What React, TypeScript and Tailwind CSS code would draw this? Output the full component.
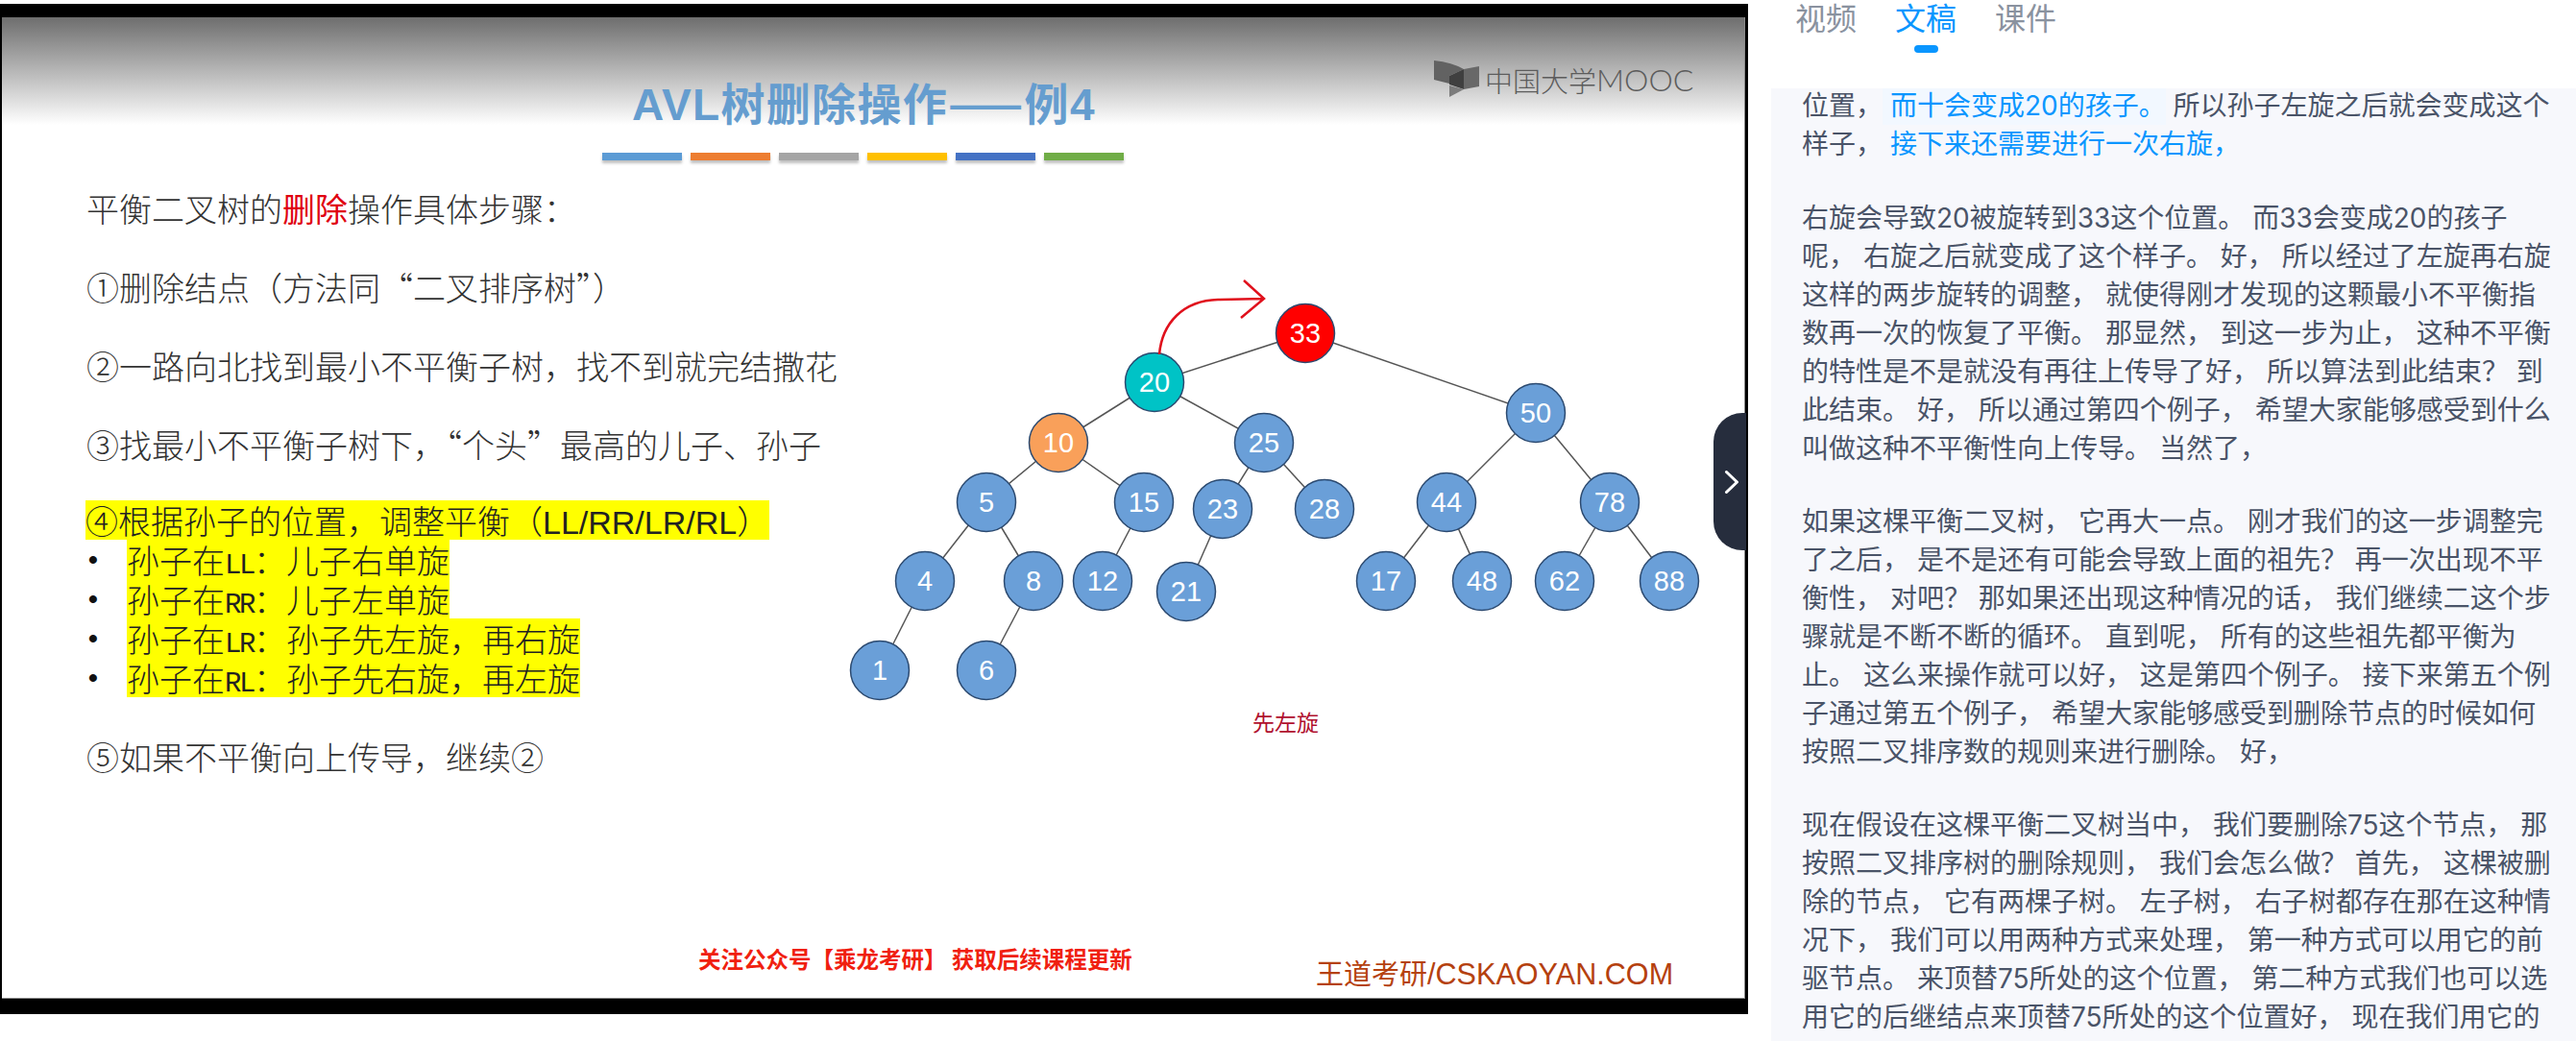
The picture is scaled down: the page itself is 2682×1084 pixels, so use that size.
import React from "react";

const nodes: [number, number, string, string?][] = [
  [1359, 343, "33", "#ff0000"], [1202, 394, "20", "#00c3c6"], [1599, 426, "50"], [1102, 457, "10", "#f9a05a"],
  [1316, 457, "25"], [1027, 519, "5"], [1191, 519, "15"], [1273, 526, "23"], [1379, 526, "28"],
  [1506, 519, "44"], [1676, 519, "78"], [963, 601, "4"], [1076, 601, "8"], [1148, 601, "12"],
  [1235, 612, "21"], [1443, 601, "17"], [1543, 601, "48"], [1629, 601, "62"], [1738, 601, "88"],
  [916, 694, "1"], [1027, 694, "6"],
];
const edges = [
  ["33", "20"], ["33", "50"], ["20", "10"], ["20", "25"], ["10", "5"], ["10", "15"], ["25", "23"], ["25", "28"],
  ["50", "44"], ["50", "78"], ["5", "4"], ["5", "8"], ["15", "12"], ["23", "21"], ["44", "17"], ["44", "48"],
  ["78", "62"], ["78", "88"], ["4", "1"], ["8", "6"],
];
const pos = (k: string) => nodes.find((n) => n[2] === k)!;

const paragraphs = [
  [
    "右旋会导致20被旋转到33这个位置。 而33会变成20的孩子",
    "呢， 右旋之后就变成了这个样子。 好， 所以经过了左旋再右旋",
    "这样的两步旋转的调整， 就使得刚才发现的这颗最小不平衡指",
    "数再一次的恢复了平衡。 那显然， 到这一步为止， 这种不平衡",
    "的特性是不是就没有再往上传导了好， 所以算法到此结束？ 到",
    "此结束。 好， 所以通过第四个例子， 希望大家能够感受到什么",
    "叫做这种不平衡性向上传导。 当然了，",
  ],
  [
    "如果这棵平衡二叉树， 它再大一点。 刚才我们的这一步调整完",
    "了之后， 是不是还有可能会导致上面的祖先？ 再一次出现不平",
    "衡性， 对吧？ 那如果还出现这种情况的话， 我们继续二这个步",
    "骤就是不断不断的循环。 直到呢， 所有的这些祖先都平衡为",
    "止。 这么来操作就可以好， 这是第四个例子。 接下来第五个例",
    "子通过第五个例子， 希望大家能够感受到删除节点的时候如何",
    "按照二叉排序数的规则来进行删除。 好，",
  ],
  [
    "现在假设在这棵平衡二叉树当中， 我们要删除75这个节点， 那",
    "按照二叉排序树的删除规则， 我们会怎么做？ 首先， 这棵被删",
    "除的节点， 它有两棵子树。 左子树， 右子树都存在那在这种情",
    "况下， 我们可以用两种方式来处理， 第一种方式可以用它的前",
    "驱节点。 来顶替75所处的这个位置， 第二种方式我们也可以选",
    "用它的后继结点来顶替75所处的这个位置好， 现在我们用它的",
  ],
];

const bullets = [
  ["孙子在", "LL", "：儿子右单旋"],
  ["孙子在", "RR", "：儿子左单旋"],
  ["孙子在", "LR", "：孙子先左旋，再右旋"],
  ["孙子在", "RL", "：孙子先右旋，再左旋"],
];

const barColors = ["bg-[#5b9bd5]", "bg-[#ed7d31]", "bg-[#a5a5a5]", "bg-[#ffc000]", "bg-[#4472c4]", "bg-[#70ad47]"];

function Tree() {
  return (
    <svg width="900" height="460" viewBox="880 280 900 460" className="block">
      {edges.map(([a, b]) => {
        const p = pos(a), q = pos(b);
        return <line key={a + b} x1={p[0]} y1={p[1]} x2={q[0]} y2={q[1]} stroke="#555" strokeWidth="1.5" />;
      })}
      {nodes.map(([x, y, t, c]) => (
        <g key={t}>
          <circle cx={x} cy={y} r="30.5" fill={c ?? "#6a9fd8"} stroke="#2c4a70" strokeWidth="1.5" />
          <text x={x} y={y + 10} textAnchor="middle" fill="#fff" fontSize="29" fontFamily="'Liberation Sans', sans-serif">{t}</text>
        </g>
      ))}
      <path d="M1207 365 C1210 332 1232 309 1268 308 L1316 307 M1295 288 L1316 307 L1292 327" fill="none" stroke="#e0101c" strokeWidth="2.5" />
    </svg>
  );
}

function MoocLogo() {
  return (
    <div className="absolute left-[1491px] top-[44px] flex items-center">
      <svg width="50" height="42" viewBox="1493 62 50 42" className="block">
        <path d="M1493 63 Q1512 65 1524 72 L1509 79 L1509 87 L1493 83 Z" fill="#626262" />
        <path d="M1524 72 L1540 69 L1540 90 L1524 93 Z" fill="#686868" />
        <path d="M1524 72 L1524 93 L1509 88 L1509 79 Z" fill="#3f3f3f" />
        <path d="M1509 89 L1524 93 L1509 101 Z" fill="#7c7c7c" />
      </svg>
      <span className="ml-[3px] text-[29px] leading-[40px] text-[#5c5c5c] font-['Noto_Sans_CJK_SC',sans-serif] font-light">中国大学</span>
      <span className="text-[32px] leading-[40px] text-[#5c5c5c] font-['Lato',sans-serif] font-light">MOOC</span>
    </div>
  );
}

function Slide() {
  return (
    <div className="relative flex h-[1022px] w-[1815px] flex-col border-r border-b border-[#8a8a8a] bg-white bg-[linear-gradient(#6e6e6e,#ffffff_112px)] font-['Noto_Sans_CJK_SC',sans-serif]">
      <MoocLogo />
      <h1 className="pt-[59px] pl-[656px] text-[46px] leading-[56px] font-bold tracking-[1.3px] text-[#659dcf]"><span className="font-['Liberation_Sans',sans-serif]">AVL</span>树删除操作——例<span className="font-['Liberation_Sans',sans-serif]">4</span></h1>
      <div className="mt-[22px] flex gap-[9px] pl-[625px]">
        {barColors.map((c) => (
          <div key={c} className={`h-[8px] w-[83px] shadow-[0_3px_3px_rgba(0,0,0,0.25)] ${c}`} />
        ))}
      </div>
      <div className="flex">
        <div className="mt-[29px] w-[878px] shrink-0 pl-[88px] text-[34px] leading-[41px] font-light whitespace-pre text-[#333]">
          <p>平衡二叉树的<span className="font-normal text-[#e00010]">删除</span>操作具体步骤：</p>
          <p className="mt-[41px]">①删除结点（方法同“二叉排序树”）</p>
          <p className="mt-[41px]">②一路向北找到最小不平衡子树，找不到就完结撒花</p>
          <p className="mt-[41px]">③找最小不平衡子树下，“个头”最高的儿子、孙子</p>
          <p className="mt-[38px] -ml-px h-[41px] w-fit bg-[#ffff00] text-[#222]">④根据孙子的位置，调整平衡（<span className="font-['Liberation_Sans',sans-serif] font-normal">LL/RR/LR/RL</span>）</p>
          {bullets.map(([a, b, c]) => (
            <div key={b} className="flex h-[41px]">
              <span className="w-[42px] pl-[2px] font-['Liberation_Sans',sans-serif] font-bold text-[28px] text-[#111]">•</span>
              <span className="h-[41px] bg-[#ffff00] text-[#222]">
                {a}
                <span className="font-['Liberation_Mono',monospace] text-[29px] leading-none tracking-[-2.4px]">{b}</span>
                {c}
              </span>
            </div>
          ))}
          <p className="mt-[41px]">⑤如果不平衡向上传导，继续②</p>
        </div>
        <div className="mt-[117px]">
          <Tree />
          <p className="-mt-[5px] pl-[424px] text-[23px] leading-[24px] text-[#b0102e]">先左旋</p>
        </div>
      </div>
      <div className="mt-auto flex h-[60px] pl-[725px]">
        <p className="mt-[7px] w-[643px] text-[23.5px] leading-[24px] font-bold text-[#f0200f]">关注公众号【乘龙考研】 获取后续课程更新</p>
        <p className="mt-[16px] text-[29px] leading-[34px] text-[#b5410f]">王道考研<span className="font-['Liberation_Sans',sans-serif] text-[30.6px]">/CSKAOYAN.COM</span></p>
      </div>
    </div>
  );
}

function Transcript() {
  return (
    <div className="-mt-[2px] pl-[32px] text-[28px] leading-[40px] whitespace-pre text-[#4a5468]">
      <div className="mb-[37px]">
        <div>
          位置，
          <span className="inline-block h-[40px] bg-[#f2f8ff] text-[#0a96ff]"> 而十会变成20的孩子。</span>
          {" 所以孙子左旋之后就会变成这个"}
        </div>
        <div>
          样子，<span className="text-[#0a96ff]"> 接下来还需要进行一次右旋，</span>
        </div>
      </div>
      {paragraphs.map((p, i) => (
        <div key={i} className="mb-[36px]">
          {p.map((l) => (
            <div key={l}>{l}</div>
          ))}
        </div>
      ))}
    </div>
  );
}

export default function App() {
  return (
    <div className="flex h-[1084px] w-[2682px] overflow-hidden bg-white font-['Inter','Noto_Sans_CJK_SC',sans-serif]">
      <div className="w-[1820px] shrink-0 pt-[4px]">
        <div className="relative h-[1052px] bg-black pt-[14px] pl-[2px]">
          <Slide />
          <div className="absolute top-[426px] right-[2px] flex h-[143px] w-[34px] items-center rounded-l-[30px] bg-[#262d3d] pl-[12px]">
            <svg width="14" height="24" viewBox="0 0 14 24" className="block">
              <path d="M1.5 1.5 L12.5 12 L1.5 22.5" fill="none" stroke="#fff" strokeWidth="3" strokeLinecap="round" strokeLinejoin="round" />
            </svg>
          </div>
        </div>
      </div>
      <div className="flex min-w-0 flex-1 flex-col">
        <div className="flex h-[92px] shrink-0 gap-[40px] pl-[49px] text-[32px] leading-[40px] text-[#8a929f]">
          <span>视频</span>
          <div className="flex flex-col items-center text-[#0a96ff]">
            <span>文稿</span>
            <span className="mt-[7px] h-[8px] w-[25px] rounded-full bg-[#0a96ff]" />
          </div>
          <span>课件</span>
        </div>
        <div className="ml-[24px] flex-1 overflow-hidden bg-[#f7f8fc]">
          <Transcript />
        </div>
      </div>
    </div>
  );
}
